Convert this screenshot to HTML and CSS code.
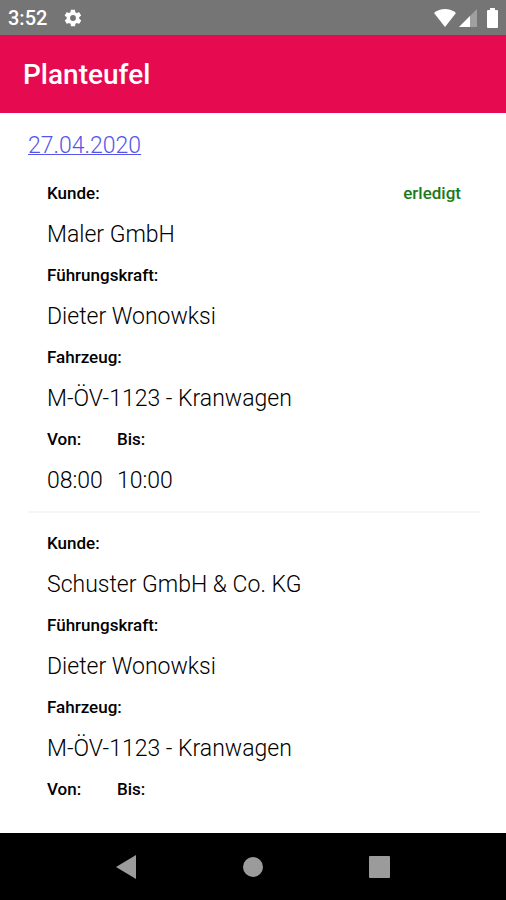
FILE: index.html
```
<!DOCTYPE html>
<html lang="de">
<head>
  <meta charset="UTF-8">
  <meta name="viewport" content="width=device-width, initial-scale=1">
  <title>Planteufel</title>
  <link rel="stylesheet" href="styles.css">
</head>
<body>
  <div class="statusbar">
    <span class="uhrzeit">3:52</span>
    <svg class="zahnrad" viewBox="0 0 24 24"><path d="M19.4 13c0-.3.1-.6.1-1s0-.7-.1-1l2.1-1.6c.2-.2.2-.4.1-.6l-2-3.5c-.1-.2-.4-.3-.6-.2l-2.5 1c-.5-.4-1.1-.7-1.7-1l-.4-2.6c0-.3-.2-.5-.5-.5h-4c-.3 0-.5.2-.5.4L9 5.100c-.6.2-1.100.6-1.700 1l-2.500-1c-.2-.1-.5 0-.6.2l-2 3.500c-.1.2-.1.5.1.6L4.500 11c0 .3-.1.6-.1 1s0 .7.1 1l-2.100 1.600c-.2.2-.2.4-.1.6l2 3.500c.1.2.4.3.6.2l2.500-1c.5.4 1.100.7 1.700 1l.4 2.600c0 .3.2.5.5.5h4c.3 0 .5-.2.5-.5l.4-2.600c.6-.3 1.200-.6 1.700-1l2.500 1c.2.1.5 0 .6-.2l2-3.500c.1-.2.1-.5-.1-.6zM12 15.500a3.500 3.500 0 1 1 0-7 3.500 3.500 0 0 1 0 7z"/></svg>
    <div class="symbole">
      <svg class="wlan" viewBox="0 0 22 18"><path d="M0 4C6-1.300 16-1.300 22 4L11 18z"/></svg>
      <svg class="signal" viewBox="0 0 18 18"><path class="schwach" d="M18 0V18H0z"/><path d="M11 7V18H0z"/></svg>
      <svg class="akku" viewBox="0 0 11 20"><path d="M3 0h5v2h2q1 0 1 1v16q0 1-1 1H1q-1 0-1-1V3q0-1 1-1h2z"/></svg>
    </div>
  </div>

  <header class="titelleiste">
    <h1>Planteufel</h1>
  </header>

  <main class="inhalt">
    <a class="datum" href="#">27.04.2020</a>

    <section class="auftrag">
      <span class="status">erledigt</span>
      <dl class="daten">
        <dt>Kunde:</dt>
        <dd>Maler GmbH</dd>
        <dt>Führungskraft:</dt>
        <dd>Dieter Wonowksi</dd>
        <dt>Fahrzeug:</dt>
        <dd>M-ÖV-1123 - Kranwagen</dd>
      </dl>
      <div class="zeiten">
        <dl>
          <dt>Von:</dt>
          <dd>08:00</dd>
        </dl>
        <dl>
          <dt>Bis:</dt>
          <dd>10:00</dd>
        </dl>
      </div>
    </section>

    <section class="auftrag">
      <dl class="daten">
        <dt>Kunde:</dt>
        <dd>Schuster GmbH &amp; Co. KG</dd>
        <dt>Führungskraft:</dt>
        <dd>Dieter Wonowksi</dd>
        <dt>Fahrzeug:</dt>
        <dd>M-ÖV-1123 - Kranwagen</dd>
      </dl>
      <div class="zeiten">
        <dl>
          <dt>Von:</dt>
        </dl>
        <dl>
          <dt>Bis:</dt>
        </dl>
      </div>
    </section>
  </main>

  <nav class="navigation">
    <button type="button" aria-label="Zurück"><svg viewBox="0 0 24 24"><path d="M22 0V24L2 12z"/></svg></button>
    <button type="button" aria-label="Startseite"><svg viewBox="0 0 24 24"><circle cx="12" cy="12" r="10"/></svg></button>
    <button type="button" aria-label="Übersicht"><svg viewBox="0 0 24 24"><rect x="1" y="1" width="21" height="22" rx="1"/></svg></button>
  </nav>
</body>
</html>
```

FILE: styles.css
```
* {
  box-sizing: border-box;
}
body {
  margin: 0;
  height: 100vh;
  display: flex;
  flex-direction: column;
  font-family: Roboto, sans-serif;
  background: #fff;
  color: #000;
}
.statusbar {
  display: flex;
  flex: none;
  align-items: center;
  gap: 16px;
  height: 35px;
  padding: 0 8px;
  background: #757575;
  color: #fff;
  font-size: 20px;
  font-weight: 500;
}
.statusbar svg {
  fill: #fff;
}
.zahnrad {
  width: 20px;
  height: 20px;
}
.symbole {
  display: flex;
  align-items: center;
  gap: 3px;
  margin-left: auto;
}
.wlan {
  width: 22px;
  height: 18px;
}
.signal {
  width: 18px;
  height: 18px;
}
.statusbar .schwach {
  fill: #a0a0a0;
}
.akku {
  width: 11px;
  height: 20px;
  margin-left: 7px;
}
.titelleiste {
  display: flex;
  flex: none;
  align-items: center;
  height: 78px;
  padding: 0 23px;
  background: #e60a50;
  color: #fff;
}
.titelleiste h1 {
  margin: 0;
  font-size: 28px;
  font-weight: 500;
}
.inhalt {
  flex: 1;
  min-height: 0;
  overflow: hidden;
  padding: 20px 26px 0 28px;
}
.datum {
  display: block;
  margin-bottom: 4px;
  color: #5555e8;
  font-size: 23px;
  font-weight: 300;
  line-height: 26px;
  text-decoration-thickness: 1px;
}
.auftrag {
  position: relative;
  padding: 10px 19px;
}
.auftrag + .auftrag {
  border-top: 2px solid #f5f5f5;
}
.auftrag dl {
  margin: 0;
}
.auftrag dt {
  font-size: 17px;
  font-weight: 500;
  line-height: 41px;
}
.auftrag dd {
  margin: 0;
  font-size: 23px;
  font-weight: 300;
  line-height: 41px;
}
.status {
  position: absolute;
  top: 10px;
  right: 19px;
  color: #1a7a1a;
  font-size: 17px;
  font-weight: 500;
  line-height: 41px;
}
.zeiten {
  display: flex;
  gap: 14px;
}
.zeiten dl {
  min-width: 56px;
}
.navigation {
  display: flex;
  flex: none;
  align-items: center;
  justify-content: center;
  gap: 103px;
  height: 67px;
  background: #000;
}
.navigation button {
  width: 24px;
  height: 24px;
  padding: 0;
  border: 0;
  background: none;
}
.navigation svg {
  display: block;
  fill: #9b9b9b;
}
```
